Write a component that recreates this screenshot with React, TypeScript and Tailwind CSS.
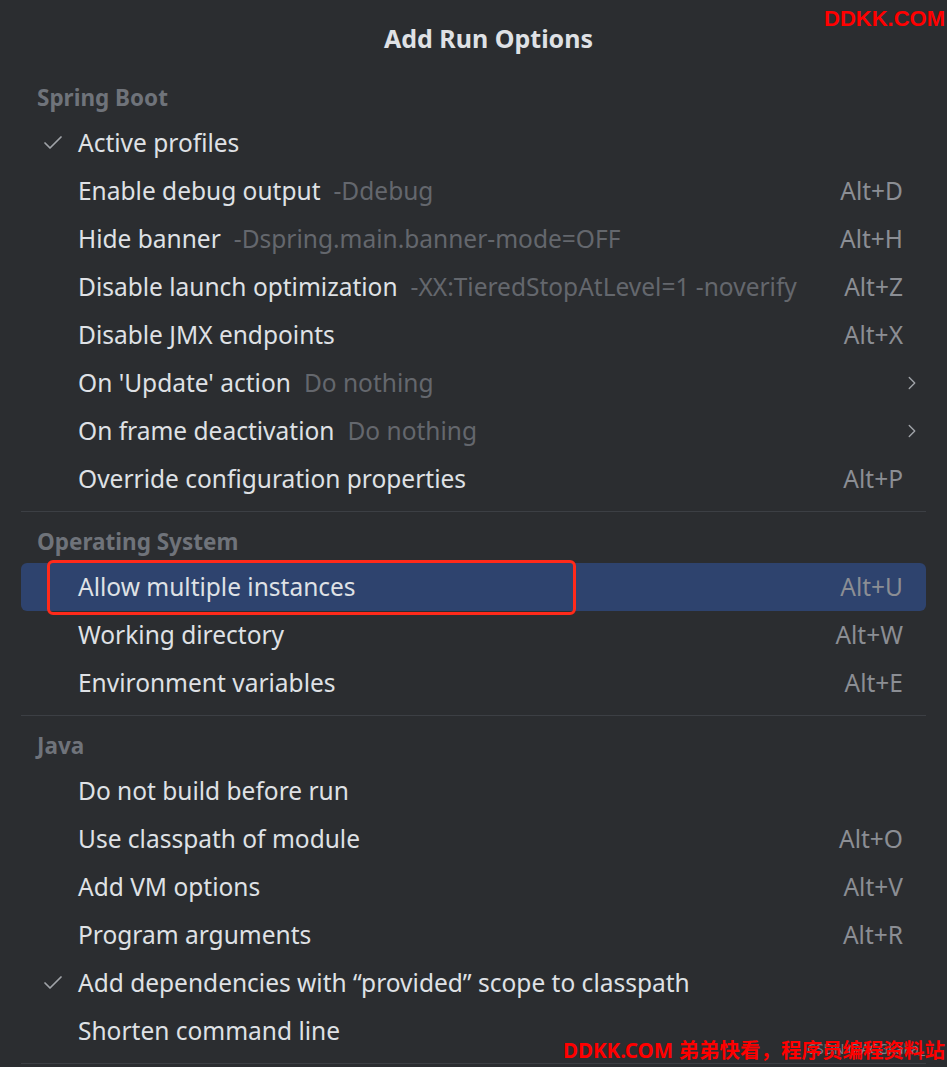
import { Check, ChevronRight } from "lucide-react";

type Item = {
  label: string;
  hint?: string;
  keys?: string;
  checked?: boolean;
  sub?: boolean;
  selected?: boolean;
};

const groups: { title: string; items: Item[] }[] = [
  {
    title: "Spring Boot",
    items: [
      { label: "Active profiles", checked: true },
      { label: "Enable debug output", hint: "-Ddebug", keys: "Alt+D" },
      { label: "Hide banner", hint: "-Dspring.main.banner-mode=OFF", keys: "Alt+H" },
      { label: "Disable launch optimization", hint: "-XX:TieredStopAtLevel=1 -noverify", keys: "Alt+Z" },
      { label: "Disable JMX endpoints", keys: "Alt+X" },
      { label: "On 'Update' action", hint: "Do nothing", sub: true },
      { label: "On frame deactivation", hint: "Do nothing", sub: true },
      { label: "Override configuration properties", keys: "Alt+P" },
    ],
  },
  {
    title: "Operating System",
    items: [
      { label: "Allow multiple instances", keys: "Alt+U", selected: true },
      { label: "Working directory", keys: "Alt+W" },
      { label: "Environment variables", keys: "Alt+E" },
    ],
  },
  {
    title: "Java",
    items: [
      { label: "Do not build before run" },
      { label: "Use classpath of module", keys: "Alt+O" },
      { label: "Add VM options", keys: "Alt+V" },
      { label: "Program arguments", keys: "Alt+R" },
      { label: "Add dependencies with \u201cprovided\u201d scope to classpath", checked: true },
      { label: "Shorten command line" },
    ],
  },
];

function Row({ item }: { item: Item }) {
  return (
    <div
      className={
        "relative flex h-12 items-center rounded-md pr-[23px] " +
        (item.selected ? "bg-[#2e436e]" : "")
      }
    >
      <div className="flex w-[57px] justify-end pr-[13px]">
        {item.checked && <Check size={24} strokeWidth={1.75} className="text-[#a0a3a8]" />}
      </div>
      <span className="text-[#dfe1e5]">{item.label}</span>
      {item.hint && <span className="ml-[13px] text-[#64676d]">{item.hint}</span>}
      <div className="ml-auto">
        {item.keys && <span className="text-[#8b8e94]">{item.keys}</span>}
        {item.sub && (
          <ChevronRight size={22} strokeWidth={1.5} className="mr-[-20px] text-[#a0a3a8]" />
        )}
      </div>
      {item.selected && (
        <div className="absolute left-[26px] top-[-3px] h-[55px] w-[529px] rounded-md border-[3px] border-[#ff2a1a]" />
      )}
    </div>
  );
}

export default function App() {
  return (
    <div className="relative h-[1067px] w-[947px] overflow-hidden bg-[#2b2d30] font-['Noto_Sans',sans-serif] text-[24.5px]">
      <div className="flex h-[77px] items-center justify-center pl-[30px] text-[25px] font-bold text-[#dfe1e5]">
        Add Run Options
      </div>
      <div className="px-[21px]">
        {groups.map((g, i) => (
          <div key={g.title}>
            {i > 0 && <div className="mb-[9px] mt-[8px] h-px bg-[#3c3f44]" />}
            <div className="flex h-[42px] items-center pl-[16px] text-[22.5px] font-bold text-[#6f737a]">
              {g.title}
            </div>
            {g.items.map((it) => (
              <Row key={it.label} item={it} />
            ))}
          </div>
        ))}
        <div className="mt-[8px] h-px bg-[#3c3f44]" />
      </div>
      <div className="absolute right-[2px] top-[2px] font-['Liberation_Sans',sans-serif] text-[22px] font-bold text-[#ff0000]">
        DDKK.COM
      </div>
      <div className="absolute bottom-[8px] right-[22px] text-[14px] text-[#7d8086]">CSDN @ACGkaka_</div>
      <div className="absolute bottom-[1px] right-[2px] font-['Noto_Sans','Noto_Sans_CJK_SC',sans-serif] text-[20.5px] font-bold text-[#ff0000]">
        DDKK.COM 弟弟快看，程序员编程资料站
      </div>
    </div>
  );
}
